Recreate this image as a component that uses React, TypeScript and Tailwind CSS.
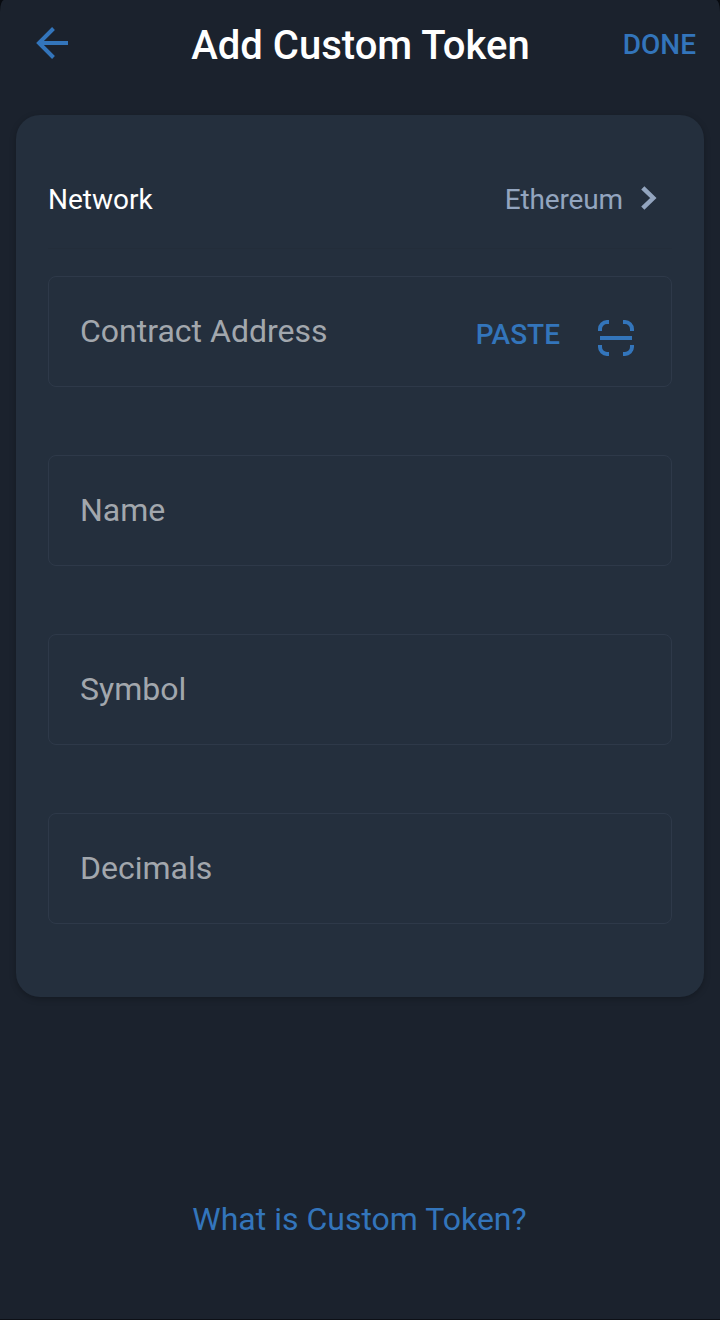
import React from 'react';

type FieldProps = {
  label: string;
  children?: React.ReactNode;
};

const Field: React.FC<FieldProps> = ({ label, children }) => (
  <div className="flex h-[111px] items-center justify-between rounded-lg border border-[#2e3949] pl-[31px] pr-[37px]">
    <span className="pb-0.5 text-[32px] leading-[38px] text-[#a2a7ad]">{label}</span>
    {children}
  </div>
);

const BackIcon = () => (
  <svg className="h-8 w-8" viewBox="0 0 32 32" fill="none" stroke="currentColor" strokeWidth="4">
    <path d="M32 16H3M17.5 1.5L3 16l14.5 14.5" />
  </svg>
);

const ChevronIcon = () => (
  <svg className="h-6 w-4" viewBox="0 0 16 24" fill="none" stroke="currentColor" strokeWidth="4.5">
    <path d="M1.8 1.8L12.3 12L1.8 22.2" />
  </svg>
);

const ScanIcon = () => (
  <svg className="h-9 w-9" viewBox="0 0 36 36" fill="none" stroke="currentColor" strokeWidth="4">
    <path d="M2 11V9a7 7 0 0 1 7-7h2M25 2h2a7 7 0 0 1 7 7v2M34 25v2a7 7 0 0 1-7 7h-2M11 34H9a7 7 0 0 1-7-7v-2M2 18h32" />
  </svg>
);

const App: React.FC = () => {
  return (
    <div className="bg-[#080b10]">
      <div className="flex h-[1320px] w-[720px] flex-col rounded-t-[4px_12px] border-b border-[#0d1016] bg-[#1b222d] font-[Roboto,sans-serif]">
        <header className="grid h-[115px] grid-cols-[1fr_auto_1fr] items-start px-6">
          <button className="ml-3 mt-[27px] text-[#3375bb]">
            <BackIcon />
          </button>
          <h1 className="mt-[22px] pl-px text-[40px] font-medium leading-[48px] text-white">Add Custom Token</h1>
          <button className="mt-[28px] justify-self-end text-[28px] font-medium leading-[33px] text-[#3375bb]">
            DONE
          </button>
        </header>

        <main className="mx-4 h-[882px] rounded-3xl bg-[#242f3d] px-8 pt-[68px] shadow-[0_2px_6px_rgba(0,0,0,0.25)]">
          <div className="flex h-[66px] items-start justify-between border-b border-[#232d3a] pr-[15px] text-[28px] leading-[33px]">
            <span className="text-white">Network</span>
            <button className="flex items-start gap-[18px] text-[#93a5bf]">
              <span className="tracking-[-0.15px]">Ethereum</span>
              <span className="pt-[3px]">
                <ChevronIcon />
              </span>
            </button>
          </div>
          <form className="mt-[27px] flex flex-col gap-[68px]">
            <Field label="Contract Address">
              <div className="flex items-center gap-[38px] pt-3 text-[#3375bb]">
                <button type="button" className="-mt-1.5 text-[28px] font-medium leading-[33px]">
                  PASTE
                </button>
                <ScanIcon />
              </div>
            </Field>
            <Field label="Name" />
            <Field label="Symbol" />
            <Field label="Decimals" />
          </form>
        </main>

        <footer className="mt-[203px] pr-px text-center">
          <a className="text-[32px] leading-[38px] text-[#3375bb]">What is Custom Token?</a>
        </footer>
      </div>
    </div>
  );
};

export default App;
